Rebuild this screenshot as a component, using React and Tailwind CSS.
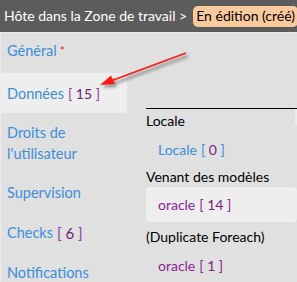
import React from "react";

const B = ({ n }) => (
  <span>
    <span className="text-[#8a3ea8]">[</span>
    <span className="text-[#6e1a72]"> {n} </span>
    <span className="text-[#8a3ea8]">]</span>
  </span>
);

export default function App() {
  return (
    <div
      className="relative w-[297px] h-[282px] overflow-hidden bg-[#e0e0e0] text-[14px]"
      style={{ fontFamily: "Lato, 'Noto Sans', sans-serif" }}
    >
      <div className="h-[32px] bg-[#5c5c5c] flex items-center pl-[4px] gap-[6px] whitespace-nowrap">
        <span className="text-white leading-none shrink-0">Hôte dans la Zone de travail &gt;</span>
        <span className="bg-[#fac99c] text-black rounded-[5px] px-[3px] h-[21px] flex items-center leading-none shrink-0">
          En édition (créé)
        </span>
      </div>
      <div className="flex border-t border-[#ebebeb] border-l">
        <div className="w-[126px] shrink-0 flex flex-col text-[#3c8edb] text-[14.5px]">
          <div className="h-[40px] shrink-0 pl-[6px] pt-[7px] leading-[21px]">
            Général<span className="ml-[3px] text-[#e02020] text-[12px] align-top">*</span>
          </div>
          <div className="h-[40px] shrink-0 pl-[6px] bg-[#eeeeee] flex items-center leading-[21px]">
            Données<span className="ml-[4px] text-[14px]"><B n="15" /></span>
          </div>
          <div className="h-[60px] shrink-0 pl-[6px] flex flex-col justify-center leading-[21px]">
            <span>Droits de</span>
            <span>l'utilisateur</span>
          </div>
          <div className="h-[40px] shrink-0 pl-[6px] flex items-center">Supervision</div>
          <div className="h-[40px] shrink-0 pl-[6px] flex items-center">
            Checks<span className="ml-[4px] text-[15px]"><B n="6" /></span>
          </div>
          <div className="h-[40px] shrink-0 pl-[6px] flex items-center">Notifications</div>
        </div>
        <div className="ml-[19px] mt-[75px] flex-1 border-t border-black flex flex-col relative">
          <div className="absolute right-0 top-0 w-[2px] h-[16px] bg-[#ececec]" />
          <div className="h-[22px] shrink-0 pt-[2px] text-black leading-[20px]">Locale</div>
          <div className="h-[36px] shrink-0 pl-[12px] flex items-center text-[#3c8edb]">
            Locale <span className="ml-[4px]"><span>[</span> <span className="text-[#7a1f82]">0</span> <span>]</span></span>
          </div>
          <div className="h-[20px] shrink-0 text-black leading-[20px] flex items-center">Venant des modèles</div>
          <div className="h-[35px] shrink-0 bg-[#eeeeee] rounded-[4px] pl-[12px] flex items-center text-[#8c1e9a]">
            oracle <span className="ml-[4px]">[ <span className="text-[#7a1f82]">14</span> ]</span>
          </div>
          <div className="h-[28px] shrink-0 text-black flex items-center">(Duplicate Foreach)</div>
          <div className="h-[30px] shrink-0 pl-[12px] flex items-center text-[#8c1e9a]">
            oracle <span className="ml-[4px]">[ <span className="text-[#7a1f82]">1</span> ]</span>
          </div>
        </div>
      </div>
      <svg className="absolute left-0 top-0 pointer-events-none" width="297" height="282">
        <defs>
          <filter id="sh" x="-20%" y="-50%" width="140%" height="200%">
            <feGaussianBlur stdDeviation="1.5" />
          </filter>
        </defs>
        <g filter="url(#sh)" opacity="0.55" transform="translate(2,3)">
          <line x1="186" y1="53" x2="108" y2="82" stroke="#555" strokeWidth="2.5" />
          <polygon points="100,85 112,75 115,84" fill="#555" />
        </g>
        <line x1="186" y1="53" x2="108" y2="82" stroke="#ff1a1a" strokeWidth="1.8" />
        <polygon points="100,85 111,75.5 115,84" fill="#ff1a1a" />
      </svg>
    </div>
  );
}
